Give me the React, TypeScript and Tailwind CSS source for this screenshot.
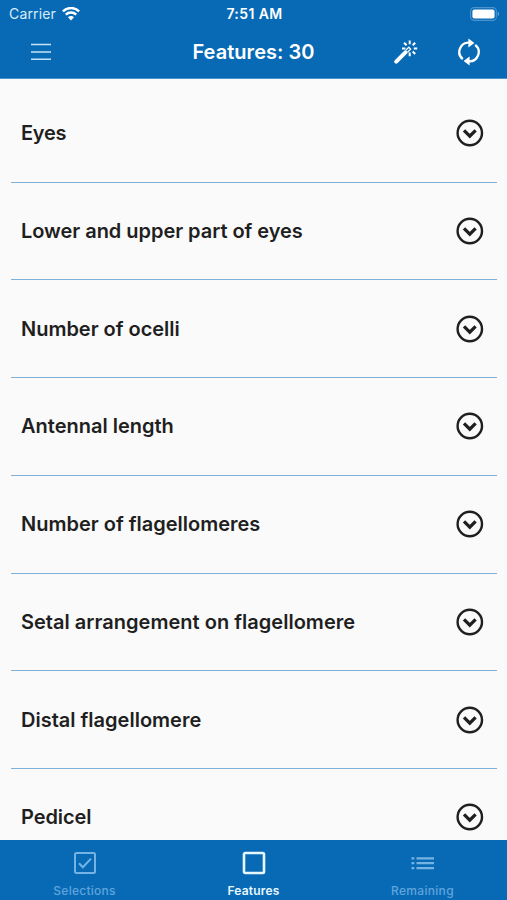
import React from 'react';

interface Feature {
  id: number;
  name: string;
  // letter spacing class, keeps each title at its iOS width
  tracking: string;
}

const features: Feature[] = [
  { id: 1, name: 'Eyes', tracking: 'tracking-[-0.3px]' },
  { id: 2, name: 'Lower and upper part of eyes', tracking: 'tracking-[-0.04px]' },
  { id: 3, name: 'Number of ocelli', tracking: 'tracking-[-0.02px]' },
  { id: 4, name: 'Antennal length', tracking: 'tracking-normal' },
  { id: 5, name: 'Number of flagellomeres', tracking: 'tracking-normal' },
  { id: 6, name: 'Setal arrangement on flagellomere', tracking: 'tracking-[0.02px]' },
  { id: 7, name: 'Distal flagellomere', tracking: 'tracking-normal' },
  { id: 8, name: 'Pedicel', tracking: 'tracking-[-0.1px]' },
];

const WifiIcon = () => (
  <svg width="18" height="14" viewBox="0 0 18 14" fill="none" stroke="#fff" strokeWidth="2.4">
    <path d="M0.9 4.3a11.6 11.6 0 0 1 16.2 0" />
    <path d="M3.8 7.6a7.5 7.5 0 0 1 10.4 0" />
    <path d="M9 13.4 6 10.3a4.2 4.2 0 0 1 6 0Z" fill="#fff" stroke="none" />
  </svg>
);

const BatteryIcon = () => (
  <svg width="30" height="14" viewBox="0 0 30 14">
    <rect x="0.6" y="0.6" width="25.8" height="12.8" rx="3.6" fill="none" stroke="#4a94d0" strokeWidth="1.1" />
    <rect x="2.4" y="2.4" width="22.2" height="9.2" rx="2" fill="#fff" />
    <path d="M27.8 4.8c1.6.6 1.6 3.8 0 4.4Z" fill="#6cace0" />
  </svg>
);

const MenuIcon = () => (
  <svg width="20" height="18" viewBox="0 0 20 18" stroke="#c4e2f7" strokeWidth="1.5">
    <path d="M0 1.5h20M0 9h20M0 16.3h20" />
  </svg>
);

const WandIcon = () => (
  <svg width="24" height="24" viewBox="0 0 24 24" fill="none" stroke="#fff">
    <path d="M2.2 21.6 11.4 12.4" strokeWidth="4" strokeLinecap="round" />
    <path d="M11.6 10.4 14.8 7.2l1.9 1.9-3.2 3.2" strokeWidth="1.3" strokeLinejoin="round" />
    <path
      d="M15.7 0.6v3.6M15.7 12.6v3.6M8 8.4h3.4M19.8 8.4h3.4M10.1 2.8l2.5 2.5M21.2 2.8l-2.5 2.5M18.7 11.5l2.5 2.5"
      strokeWidth="2"
    />
  </svg>
);

const SyncIcon = () => (
  <svg width="24" height="28" viewBox="0 0 24 28" fill="none" stroke="#fff" strokeWidth="2.3">
    <path d="M5.8 21.2A9.3 9.3 0 0 1 12.4 4.7" />
    <path d="M18.2 6.8A9.3 9.3 0 0 1 11.6 23.3" />
    <path d="M11.4 0.4 17.4 5 11.4 9.6Z" fill="#fff" stroke="none" />
    <path d="M12.6 27.6 6.6 23 12.6 18.4Z" fill="#fff" stroke="none" />
  </svg>
);

const ExpandIcon = () => (
  <svg width="28" height="28" viewBox="0 0 28 28" fill="none" stroke="#1f1f1f">
    <circle cx="13.8" cy="14" r="12.2" strokeWidth="2.4" />
    <path d="M8 11.4 13.8 17.1l5.8-5.7" strokeWidth="3.3" />
  </svg>
);

const CheckboxIcon = () => (
  <svg width="24" height="24" viewBox="0 0 24 24" fill="none" stroke="#74b3e4" strokeWidth="2">
    <rect x="2" y="2" width="20" height="20" rx="1.5" />
    <path d="m6 12.3 3.8 4L18 7.6" />
  </svg>
);

const SquareIcon = () => (
  <svg width="24" height="24" viewBox="0 0 24 24" fill="none" stroke="#e6f7ff" strokeWidth="2.6">
    <rect x="2" y="2" width="20" height="20" rx="1.2" />
  </svg>
);

const ListIcon = () => (
  <svg width="24" height="24" viewBox="0 0 24 24" stroke="#74b3e4" strokeWidth="2.2">
    <path d="M0.5 7.3h2.8M5.5 7.3H23M0.5 12.2h2.8M5.5 12.2H23M0.5 17.1h2.8M5.5 17.1H23" />
  </svg>
);

const Header: React.FC<{ count: number }> = ({ count }) => (
  <header className="h-[79px] shrink-0 border-b border-[#4a94cc] bg-[#086ab5] text-white">
    <div className="grid h-[27px] grid-cols-3 items-center pl-[9px] pr-[7px]">
      <div className="flex items-center gap-[6px] text-[14px] tracking-[0.15px] text-[#d9edfa]">
        <span>Carrier</span>
        <WifiIcon />
      </div>
      <div className="text-center text-[14px] font-semibold tracking-[0.4px]">7:51 AM</div>
      <div className="flex justify-end">
        <BatteryIcon />
      </div>
    </div>
    <div className="grid h-[50px] grid-cols-[1fr_auto_1fr] items-center">
      <div className="pl-[31px]">
        <MenuIcon />
      </div>
      <h1 className="text-[20px] font-semibold tracking-[0.04px]">Features: {count}</h1>
      <div className="flex items-center justify-end gap-[39px] pr-[26px]">
        <WandIcon />
        <SyncIcon />
      </div>
    </div>
  </header>
);

const FeatureRow: React.FC<{ feature: Feature }> = ({ feature }) => (
  <li className="flex h-[97.75px] shrink-0 items-center justify-between border-b border-[#7fb0d8] pl-[10px] pr-[13px]">
    <span className={`whitespace-nowrap text-[20px] font-semibold text-[#1f1f1f] ${feature.tracking}`}>
      {feature.name}
    </span>
    <ExpandIcon />
  </li>
);

const TabBar = () => (
  <nav className="grid h-[60px] shrink-0 grid-cols-3 bg-[#086ab5] pt-[11px] text-[12px] font-medium text-[#5fa5dc]">
    <div className="flex flex-col items-center gap-[7px]">
      <CheckboxIcon />
      <span className="leading-[18px] tracking-[0.25px]">Selections</span>
    </div>
    <div className="flex flex-col items-center gap-[7px] text-[#e6f7ff]">
      <SquareIcon />
      <span className="font-semibold leading-[18px] tracking-[0.2px]">Features</span>
    </div>
    <div className="flex flex-col items-center gap-[7px]">
      <ListIcon />
      <span className="leading-[18px] tracking-[0.3px]">Remaining</span>
    </div>
  </nav>
);

export default function App() {
  return (
    <div className="flex h-[900px] w-[507px] flex-col overflow-hidden bg-[#fafafa] font-['Inter','Liberation_Sans',sans-serif]">
      <Header count={30} />
      <ul className="flex min-h-0 flex-1 flex-col overflow-hidden pl-[11px] pr-[10px] pt-[5.8px]">
        {features.map((feature) => (
          <FeatureRow key={feature.id} feature={feature} />
        ))}
      </ul>
      <TabBar />
    </div>
  );
}
